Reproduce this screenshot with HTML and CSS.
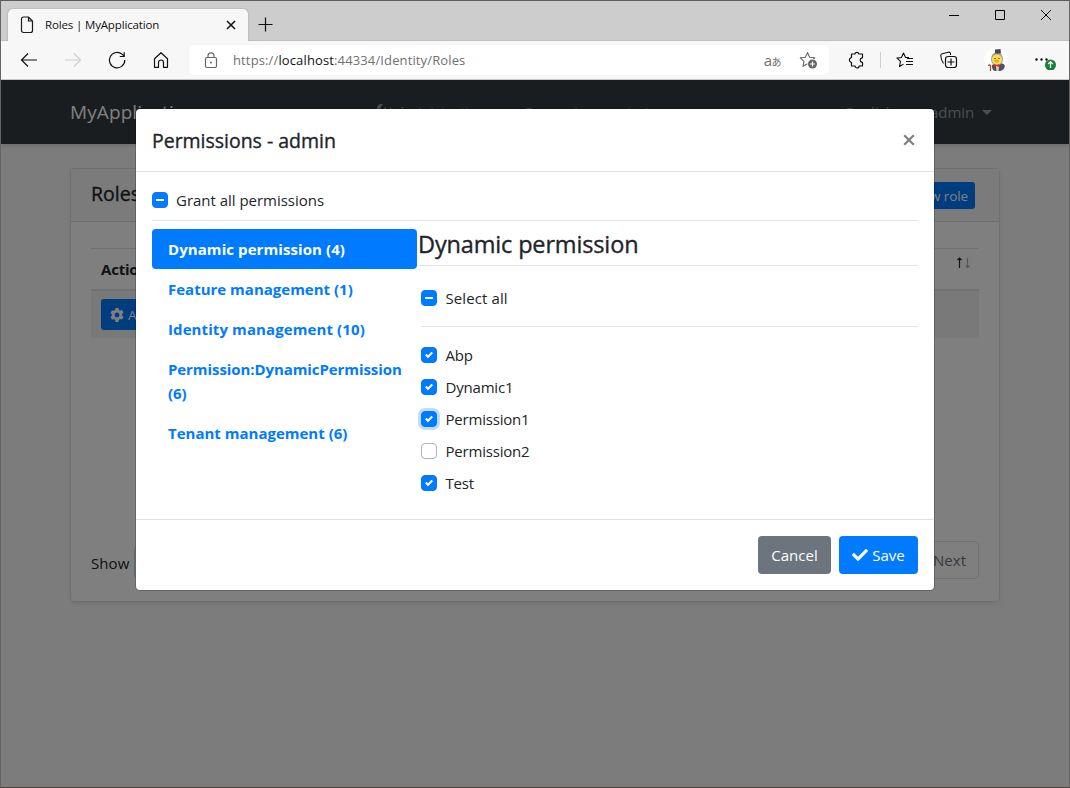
FILE: index.html
```html
<!DOCTYPE html>
<html lang="en">
<head>
<meta charset="utf-8">
<title>Roles | MyApplication</title>
<link rel="stylesheet" href="styles.css">
</head>
<body>
<div class="window">
  <header class="tabstrip">
    <div class="tab">
      <svg class="tab-doc" width="14" height="18" viewBox="0 0 14 18"><path d="M1.500 3a2 2 0 0 1 2-2h5l4 4v9.500a2 2 0 0 1-2 2h-7a2 2 0 0 1-2-2zM8.500 1v4h4" fill="none" stroke="#1b1b1b" stroke-width="1.200"/></svg>
      <span class="tab-title">Roles | MyApplication</span>
      <svg class="tab-close" width="10" height="10" viewBox="0 0 10 10"><path d="M1 1l8 8M9 1l-8 8" stroke="#111" stroke-width="1.500"/></svg>
    </div>
    <svg class="new-tab" width="15" height="15" viewBox="0 0 15 15"><path d="M7.500 .5v14M.5 7.500h14" stroke="#111" stroke-width="1.200"/></svg>
    <div class="window-controls">
      <svg width="10" height="10" viewBox="0 0 10 10"><path d="M0 5.500h10" stroke="#000"/></svg>
      <svg width="10" height="10" viewBox="0 0 10 10"><path d="M.5 .5h9v9h-9z" fill="none" stroke="#000"/></svg>
      <svg width="10" height="10" viewBox="0 0 10 10"><path d="M0 0l10 10M10 0L0 10" stroke="#000"/></svg>
    </div>
  </header>
  <div class="toolbar">
    <nav class="nav-icons">
      <svg width="20" height="20" viewBox="0 0 20 20"><path d="M18 10H2.500M9 3.500L2.500 10 9 16.500" fill="none" stroke="#111" stroke-width="1.200"/></svg>
      <svg width="20" height="20" viewBox="0 0 20 20"><path d="M2 10h15.500M11 3.500l6.500 6.500-6.500 6.500" fill="none" stroke="#cfcfcf" stroke-width="1.200"/></svg>
      <svg width="20" height="20" viewBox="0 0 20 20"><path d="M17.800 10a7.700 7.700 0 1 1-2.500-5.600L17 6M17.200 2.200V6.500H12.800" fill="none" stroke="#111" stroke-width="1.200"/></svg>
      <svg width="20" height="20" viewBox="0 0 20 20"><path d="M3.500 8.700L10 2.700l6.500 6v8.600h-4v-4.800a2.500 2.500 0 0 0-5 0v4.800h-4z" fill="none" stroke="#111" stroke-width="1.200" stroke-linejoin="round"/></svg>
    </nav>
    <div class="address">
      <svg width="14" height="17" viewBox="0 0 14 17"><path d="M4 5.500V3.800a3 3 0 0 1 6 0v1.700" fill="none" stroke="#666" stroke-width="1.200"/><rect x="1.500" y="5.500" width="11" height="10" rx="1.500" fill="none" stroke="#666" stroke-width="1.200"/><circle cx="7" cy="10.500" r="1" fill="#666"/></svg>
      <span class="url">https://<b>localhost</b>:44334/Identity/Roles</span>
      <span class="translate">a<small>あ</small></span>
      <svg width="20" height="20" viewBox="0 0 20 20"><path d="M8.500 2.500l2.100 4.700 5.200.6-3.900 3.500 1 5-4.400-2.500-4.500 2.500 1-5L1.200 7.800l5.200-.6z" fill="none" stroke="#666" stroke-width="1.100" stroke-linejoin="round"/><circle cx="13.500" cy="14" r="5.300" fill="#fff"/><circle cx="13.500" cy="14" r="4.500" fill="#666"/><path d="M13.500 11.500v5M11 14h5" stroke="#fff" stroke-width="1.200"/></svg>
    </div>
    <div class="actions">
      <svg width="20" height="20" viewBox="0 0 20 20"><path d="M4.500 4h3.400a2 2 0 0 1 3.900 0h3.700v3.800h-.5a2.300 2.300 0 0 0 0 4.500h.5V16h-3.400a2 2 0 0 1-4 0H4.500v-3.500l-1-.6a2.200 2.200 0 0 1 0-3.800l1-.6z" fill="none" stroke="#111" stroke-width="1.200" stroke-linejoin="round"/></svg>
      <i class="divider"></i>
      <svg width="20" height="20" viewBox="0 0 20 20"><path d="M14 7.500H10.600L8.500 3 6.400 7.500 2 8.100l3.500 3.300-1 5.100 4-2.400M11 11.500h7M11 14.500h7M12 8.500h6" fill="none" stroke="#111" stroke-width="1.100" stroke-linejoin="round"/></svg>
      <svg width="20" height="20" viewBox="0 0 20 20"><path d="M4.500 13.500C2.500 11 2 8 1.700 5.500c0-1 .6-1.500 1.500-1.800l6-1.500c1-.2 2 0 2.300 1.300V5" fill="none" stroke="#111" stroke-width="1.100"/><rect x="6.500" y="6.500" width="11" height="11" rx="2.500" fill="#f7f7f7" stroke="#111" stroke-width="1.200"/><path d="M12 8.500v7M8.500 12h7" stroke="#111" stroke-width="1.200"/></svg>
      <svg class="avatar" width="24" height="24" viewBox="0 0 24 24"><circle cx="12" cy="12" r="12" fill="#fff"/><path d="M6.500 23V18c0-1.600-2-1.600-2 0" fill="none" stroke="#a44a20" stroke-width="1.300"/><path d="M8 17c3-2 10-3 12.500 0 1 2-1 5-4 6h-6c-2-1-3-4-2.500-6z" fill="#55505c"/><path d="M12 18h3l-.500 5h-2z" fill="#d8d0d8"/><ellipse cx="13" cy="11" rx="6" ry="6.800" fill="#a9979f"/><ellipse cx="13" cy="11.500" rx="5" ry="5.200" fill="#f8e04c"/><ellipse cx="12.500" cy="13" rx="2.600" ry="1.400" fill="#f0a02c"/><path d="M11 1.500l5.500-.5.500 4.500h-6z" fill="#4c4650"/><path d="M9.800 16l2.700 1 2.700-1v3l-2.700-1-2.700 1z" fill="#e0222d"/><circle cx="11" cy="10.500" r=".6"/><circle cx="15" cy="10.500" r=".6"/></svg>
      <svg class="more" width="24" height="20" viewBox="0 0 24 20"><g fill="#111"><circle cx="2.500" cy="9.500" r="1.200"/><circle cx="7.500" cy="9.500" r="1.200"/><circle cx="12.500" cy="9.500" r="1.200"/></g><circle cx="16.500" cy="15" r="5.500" fill="#128238"/><path d="M16.500 18v-6M14.200 14l2.300-2.300 2.300 2.300" fill="none" stroke="#fff" stroke-width="1.300"/></svg>
    </div>
  </div>

  <main class="page">
    <div class="navbar">
      <span class="brand">MyApplication</span>
      <span class="menu-admin"><svg width="16" height="16" viewBox="0 0 512 512"><path d="M507 109c-2-9-13-12-20-5l-74 74-68-11-11-68 74-74c7-7 4-18-5-20A144 144 0 0 0 223 177L19 381a79 79 0 1 0 112 112l204-204A144 144 0 0 0 507 109z" fill="currentColor"/></svg>Administration</span>
      <span class="menu-dynamic">Dynamic permission</span>
      <span class="menu-lang">English</span>
      <span class="menu-user">admin <i class="caret"></i></span>
    </div>
    <section class="card">
      <div class="card-head"><h5>Roles</h5><span class="btn-new">+ New role</span></div>
      <div class="card-body">
        <div class="thead"><span>Actions</span><span class="sort"><svg width="14" height="12" viewBox="0 0 14 12"><path d="M2.500 11V1M.5 3l2-2 2 2" fill="none" stroke="#212529" stroke-width="1.200"/><path d="M10.500 1v10M8.500 8.500l2 2 2-2" fill="none" stroke="#aaa" stroke-width="1.100"/></svg></span></div>
        <div class="row"><span class="btn-actions"><svg width="14" height="14" viewBox="0 0 14 14"><path fill="#fff" fill-rule="evenodd" d="M5.500 0h3l.4 1.900 1.200.7 1.900-.6 1.500 2.600-1.400 1.300v1.400L13.500 9 12 11.600l-1.900-.6-1.200.8L8.500 14h-3l-.4-2.100-1.200-.8-1.900.6L.5 9l1.400-1.300V6.300L.5 4.900 2 2.200l1.900.6 1.200-.8zM7 4.600A2.400 2.400 0 1 0 7 9.400 2.400 2.400 0 0 0 7 4.600z"/></svg>Actions</span></div>
        <div class="table-foot"><span class="show">Show <i class="select"></i></span><span class="next">Next</span></div>
      </div>
    </section>

    <div class="backdrop"></div>
    <div class="modal">
      <div class="modal-head"><h5>Permissions - admin</h5><svg width="12" height="12" viewBox="0 0 12 12"><path d="M1.200 1.200l9.600 9.600M10.800 1.200l-9.600 9.600" stroke="#7f7f7f" stroke-width="2.200"/></svg></div>
      <div class="modal-body">
        <div class="check grant"><i class="box some"></i>Grant all permissions</div>
        <div class="columns">
          <div class="pills">
            <span class="pill active">Dynamic permission (4)</span>
            <span class="pill">Feature management (1)</span>
            <span class="pill wide">Identity management (10)</span>
            <span class="pill">Permission:DynamicPermission (6)</span>
            <span class="pill">Tenant management (6)</span>
          </div>
          <div class="pane">
            <h4>Dynamic permission</h4>
            <div class="perms">
              <div class="check select-all"><i class="box some"></i>Select all</div>
              <div class="check"><i class="box on"><svg viewBox="0 0 8 8"><path d="M6.564.75l-3.590 3.612-1.538-1.550L0 4.260 2.974 7.250 8 2.193z"/></svg></i>Abp</div>
              <div class="check"><i class="box on"><svg viewBox="0 0 8 8"><path d="M6.564.75l-3.590 3.612-1.538-1.550L0 4.260 2.974 7.250 8 2.193z"/></svg></i>Dynamic1</div>
              <div class="check"><i class="box on focus"><svg viewBox="0 0 8 8"><path d="M6.564.75l-3.590 3.612-1.538-1.550L0 4.260 2.974 7.250 8 2.193z"/></svg></i>Permission1</div>
              <div class="check"><i class="box"></i>Permission2</div>
              <div class="check"><i class="box on"><svg viewBox="0 0 8 8"><path d="M6.564.75l-3.590 3.612-1.538-1.550L0 4.260 2.974 7.250 8 2.193z"/></svg></i>Test</div>
            </div>
          </div>
        </div>
      </div>
      <div class="modal-foot">
        <span class="btn cancel">Cancel</span>
        <span class="btn save"><svg width="16" height="16" viewBox="0 0 512 512"><path fill="#fff" d="M173.900 439.400L7.500 273c-10-10-10-26.200 0-36.200l36.200-36.200c10-10 26.200-10 36.200 0L192 312.700 432.100 72.600c10-10 26.200-10 36.200 0l36.200 36.200c10 10 10 26.200 0 36.200L210.100 439.400c-10 10-26.200 10-36.200 0z"/></svg>Save</span>
      </div>
    </div>
  </main>
</div>
</body>
</html>
```
FILE: styles.css
```css
* { box-sizing: border-box; }
body { margin: 0; font-family: "Open Sans", "Noto Sans", sans-serif; font-size: 15px; line-height: 24px; color: #212529; letter-spacing: -0.2px; }
h4, h5 { margin: 0; font-weight: 500; -webkit-text-stroke: 0.35px currentColor; }
svg { display: block; flex: none; }
.window { width: 1070px; height: 788px; border: 1px solid #696463; border-bottom-color: #4b443c; border-top-color: #5f5b5b; display: flex; flex-direction: column; background: #cdcdcd; overflow: hidden; }

.tabstrip { height: 40px; display: flex; align-items: flex-start; border-bottom: 1px solid #c0c0c0; }
.tab { width: 240px; height: 32px; margin: 8px 0 0 7px; padding: 0 12px; background: #f7f7f7; border-radius: 5px 5px 0 0; display: flex; align-items: center; box-shadow: 0 0 2px rgba(0,0,0,.25); }
.tab-title { flex: 1; margin-left: 11px; font-size: 11.500px; color: #111; letter-spacing: -0.15px; }
.new-tab { margin: 16px 0 0 10px; }
.window-controls { margin: 9px 18px 0 auto; display: flex; gap: 36px; }

.toolbar { height: 39px; background: #f7f7f7; border-bottom: 1px solid #c8c8c8; display: flex; align-items: center; }
.nav-icons { display: flex; gap: 24px; margin-left: 18px; }
.address { width: 640px; height: 30px; margin-left: 18px; padding: 0 10px 0 15px; border-radius: 4px; background: #fff; display: flex; align-items: center; color: #707070; box-shadow: 0 0 2px rgba(0,0,0,.06); }
.url { flex: 1; margin-left: 15px; font-size: 13px; letter-spacing: 0.13px; }
.url b { font-weight: 400; color: #111; }
.translate { font-size: 15px; line-height: 20px; margin-right: 18px; letter-spacing: -0.5px; }
.translate small { font: 10px "Noto Sans CJK JP", sans-serif; }
.actions { display: flex; align-items: center; margin-left: 18px; }
.divider { width: 1px; height: 16px; background: #d0d0d0; margin: 0 14px 0 13px; }
.actions .divider + svg { margin-right: 24px; }
.avatar { margin: 0 26px 0 25px; }

.page { flex: 1; position: relative; background: #f9f9f9; overflow: hidden; }
.navbar { height: 64px; background: #343a40; display: flex; align-items: center; padding: 0 77px 0 69px; color: rgba(255,255,255,.5); box-shadow: 0 2px 4px rgba(0,0,0,.12); }
.brand { width: 300px; font-size: 19px; letter-spacing: 0.1px; color: #fff; }
.menu-admin { display: flex; align-items: center; gap: 0; width: 155px; }
.menu-dynamic { width: 321px; letter-spacing: 0; }
.menu-lang { width: 85px; letter-spacing: 0; }
.menu-user { display: flex; align-items: center; gap: 8px; letter-spacing: -0.1px; }
.caret { border: 5px solid transparent; border-top-color: currentColor; border-bottom: 0; }
.card { width: 930px; height: 434px; margin: 24px 0 0 69px; border: 1px solid #dfdfdf; border-radius: 4px; background: #fff; display: flex; flex-direction: column; box-shadow: 0 2px 4px rgba(0,0,0,.075); }
.card-head { height: 53px; background: #f7f7f7; border-bottom: 1px solid #dfdfdf; display: flex; justify-content: space-between; padding: 13px 24px 0 20px; }
.card-head h5 { font-size: 19.500px; line-height: 24px; letter-spacing: 0; }
.btn-new { height: 27px; padding: 0 7px; background: #007bff; color: #fff; border-radius: 3px; font-size: 13.500px; line-height: 28px; letter-spacing: -0.1px; }
.card-body { flex: 1; padding: 26px 20px 22px; display: flex; flex-direction: column; }
.thead { height: 43px; border-top: 1px solid #dee2e6; border-bottom: 2px solid #dee2e6; padding: 8px 8px 0 10px; font-weight: 700; display: flex; justify-content: space-between; }
.row { height: 47px; padding: 8px 10px; background: #f2f2f2; }
.btn-actions { display: inline-flex; align-items: center; gap: 4px; height: 31px; padding: 0 9px; border-radius: 3px; background: #007bff; color: #fff; font-size: 13.500px; }
.table-foot { margin-top: auto; display: flex; justify-content: space-between; align-items: center; }
.show { display: flex; align-items: center; gap: 5px; padding-top: 5px; letter-spacing: 0.1px; }
.select { width: 60px; height: 31px; border: 1px solid #ced4da; border-radius: 3px; }
.next { height: 38px; padding: 6px 12px; border: 1px solid #dee2e6; border-radius: 4px; color: #6c757d; letter-spacing: 0; }

.backdrop { position: absolute; inset: 0; background: rgba(0,0,0,.5); }
.modal { position: absolute; left: 135px; top: 29px; width: 798px; height: 481px; background: #fff; border-radius: 4px; box-shadow: 0 0 0 1px rgba(0,0,0,.2); display: flex; flex-direction: column; }
.modal-head { height: 63px; padding: 0 19px 0 16px; border-bottom: 1px solid #dee2e6; display: flex; align-items: center; justify-content: space-between; }
.modal-head h5 { font-size: 19.500px; line-height: 24px; letter-spacing: -0.02px; padding-top: 1px; }
.modal-body { flex: 1; padding: 16px; }
.check { height: 24px; margin-bottom: 8px; display: flex; align-items: center; gap: 8px; }
.box { width: 16px; height: 16px; flex: none; border: 1px solid #adb5bd; border-radius: 4px; display: flex; align-items: center; justify-content: center; background: #fff; }
.box.on, .box.some { background: #007bff; border-color: #007bff; }
.box.some::after { content: ""; width: 8px; height: 2px; background: #fff; }
.box svg { width: 8px; height: 8px; fill: #fff; }
.box.focus { box-shadow: 0 0 0 3px rgba(0,123,255,.25); }
.grant { height: 33px; padding-bottom: 8px; border-bottom: 1px solid #e5e5e5; letter-spacing: -0.02px; }
.columns { display: flex; }
.pills { width: 265px; display: flex; flex-direction: column; font-weight: 700; color: #007bff; letter-spacing: 0; }
.pill { padding: 8px 12px 8px 16px; border-radius: 4px; }
.pill.wide { letter-spacing: 0.1px; }
.pill:nth-child(4) { letter-spacing: -0.08px; }
.pill.active { background: #007bff; color: #fff; letter-spacing: 0.08px; }
.pane { flex: 1; padding-left: 1px; }
.pane h4 { height: 37px; font-size: 23.500px; line-height: 31px; letter-spacing: -0.15px; border-bottom: 1px solid #e5e5e5; }
.perms { padding: 16px 0 0 3px; }
.perms .check { gap: 8.500px; }
.perms .select-all { height: 45px; margin-bottom: 16px; padding-bottom: 12px; border-bottom: 1px solid #e5e5e5; letter-spacing: 0.1px; }
.modal-foot { height: 71px; padding: 0 16px; border-top: 1px solid #dee2e6; display: flex; justify-content: flex-end; align-items: center; gap: 8px; }
.btn { height: 38px; border-radius: 4px; color: #fff; display: flex; align-items: center; justify-content: center; gap: 4px; letter-spacing: 0; }
.cancel { width: 73px; background: #6c757d; }
.save { width: 79px; background: #007bff; }
```
